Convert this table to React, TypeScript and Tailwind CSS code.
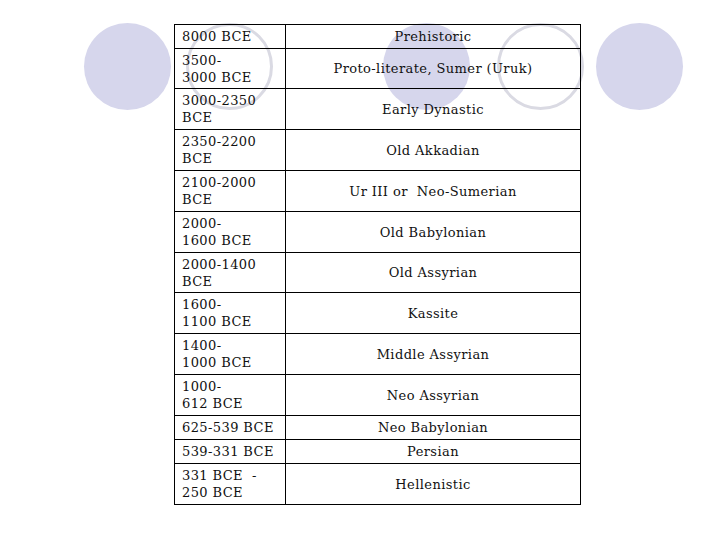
import React from 'react';

type Period = { date: string[]; name: string; h: string };

const periods: Period[] = [
  { date: ['8000 BCE'], name: 'Prehistoric', h: 'h-[24px]' },
  { date: ['3500-', '3000 BCE'], name: 'Proto-literate, Sumer (Uruk)', h: 'h-[40px]' },
  { date: ['3000-2350', 'BCE'], name: 'Early Dynastic', h: 'h-[41px]' },
  { date: ['2350-2200', 'BCE'], name: 'Old Akkadian', h: 'h-[41px]' },
  { date: ['2100-2000', 'BCE'], name: 'Ur III or\u00a0 Neo-Sumerian', h: 'h-[41px]' },
  { date: ['2000-', '1600 BCE'], name: 'Old Babylonian', h: 'h-[41px]' },
  { date: ['2000-1400', 'BCE'], name: 'Old Assyrian', h: 'h-[40px]' },
  { date: ['1600-', '1100 BCE'], name: 'Kassite', h: 'h-[41px]' },
  { date: ['1400-', '1000 BCE'], name: 'Middle Assyrian', h: 'h-[41px]' },
  { date: ['1000-', '612 BCE'], name: 'Neo Assyrian', h: 'h-[41px]' },
  { date: ['625-539 BCE'], name: 'Neo Babylonian', h: 'h-[24px]' },
  { date: ['539-331 BCE'], name: 'Persian', h: 'h-[24px]' },
  { date: ['331 BCE\u00a0 -', '250 BCE'], name: 'Hellenistic', h: 'h-[41px]' },
];

function Dot() {
  return <div className="h-[87px] w-[87px] shrink-0 rounded-full bg-[#d6d6ec]" />;
}

function Ring() {
  return <div className="h-[87px] w-[87px] shrink-0 rounded-full border-[3px] border-[#dadae3]" />;
}

export default function App() {
  return (
    <div className="relative h-[540px] w-[720px] overflow-hidden bg-white font-['DejaVu_Serif',serif] text-[13px] leading-[17px] tracking-[0.4px] text-[#111]">
      {/* background circles from the slide template */}
      <div className="absolute inset-x-0 top-[23px] flex">
        <div className="ml-[84px]"><Dot /></div>
        <div className="ml-[15px]"><Ring /></div>
        <div className="ml-[110px]"><Dot /></div>
        <div className="ml-[27px]"><Ring /></div>
        <div className="ml-[12px]"><Dot /></div>
      </div>

      <div className="relative ml-[174px] pt-[24px]">
        <div className="w-[407px] border-l border-t border-black">
          {periods.map((p, i) => (
            <div key={i} className={`grid grid-cols-[111px_295px] ${p.h}`}>
              <div className="flex flex-col justify-center border-r border-b border-black pl-[7px]">
                {p.date.map((d, j) => (
                  <span key={j} className="whitespace-pre">{d}</span>
                ))}
              </div>
              <div className="flex items-center justify-center border-r border-b border-black">
                <span className="whitespace-pre">{p.name}</span>
              </div>
            </div>
          ))}
        </div>
      </div>
    </div>
  );
}
